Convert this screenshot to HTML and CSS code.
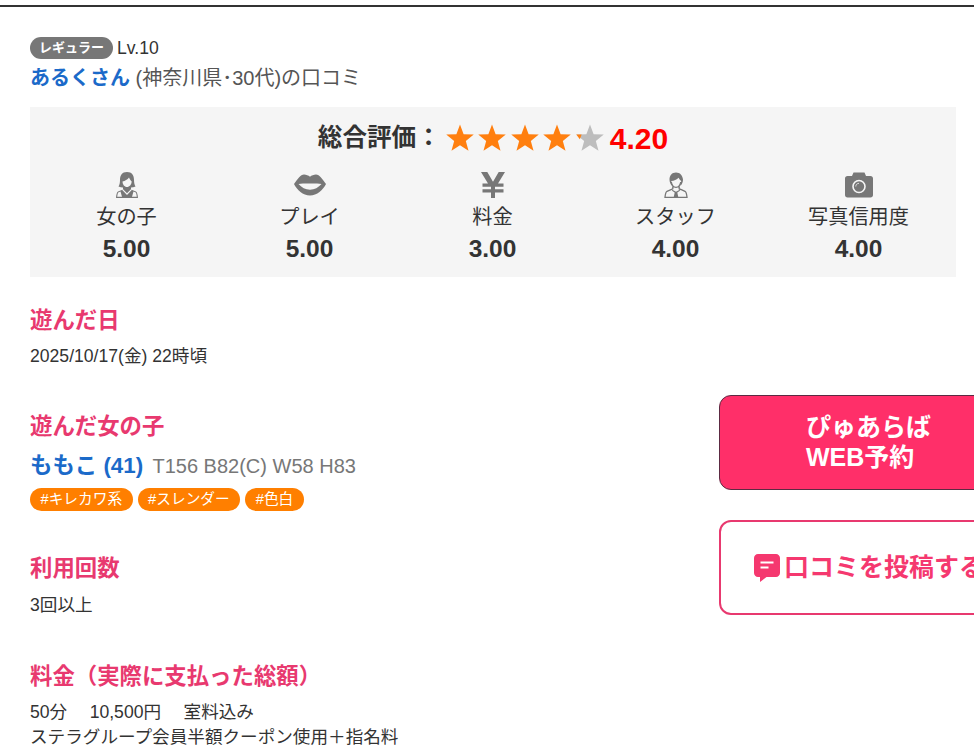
FILE: index.html
```html
<!DOCTYPE html>
<html lang="ja">
<head>
  <meta charset="UTF-8" />
  <title>口コミ</title>
  <link rel="stylesheet" href="styles.css">
</head>
<body>
  <main class="review">
    <div class="reviewer">
      <div class="rank"><span class="rank-badge">レギュラー</span><span class="rank-level">Lv.10</span></div>
      <div class="reviewer-name"><a href="#">あるくさん</a> (神奈川県･30代)の口コミ</div>
    </div>

    <section class="rating">
      <div class="rating-total">
        <span class="rating-label">総合評価：</span>
        <span class="stars">
          <svg viewBox="0 0 24 24"><path class="on" d="M12 .5l3.1 8.2 8.7.4-6.8 5.5 2.3 8.4L12 18.200l-7.300 4.800 2.300-8.400L.2 9.100l8.700-.4z"/></svg>
          <svg viewBox="0 0 24 24"><path class="on" d="M12 .5l3.1 8.2 8.7.4-6.8 5.5 2.3 8.4L12 18.200l-7.300 4.800 2.300-8.400L.2 9.100l8.700-.4z"/></svg>
          <svg viewBox="0 0 24 24"><path class="on" d="M12 .5l3.1 8.2 8.7.4-6.8 5.5 2.3 8.4L12 18.200l-7.300 4.800 2.300-8.400L.2 9.100l8.700-.4z"/></svg>
          <svg viewBox="0 0 24 24"><path class="on" d="M12 .5l3.1 8.2 8.7.4-6.8 5.5 2.3 8.4L12 18.200l-7.300 4.800 2.300-8.400L.2 9.100l8.700-.4z"/></svg>
          <svg viewBox="0 0 24 24">
            <path class="off" d="M12 .5l3.1 8.2 8.7.4-6.8 5.500 2.300 8.400L12 18.200l-7.300 4.800 2.300-8.400L.2 9.100l8.700-.4z"/>
            <path class="on" d="M.2 9.100l4.600-.2L3.300 13z"/>
          </svg>
        </span>
        <span class="rating-score">4.20</span>
      </div>
      <div class="rating-items">
        <div class="rating-item">
          <svg class="item-icon" viewBox="0 0 24 26">
            <path d="M12 0C7 0 5 3.500 5 8c0 3-.5 5-1.500 6.500 1.500.7 3 1 4.500 1v2L3 19.500C1.800 20.300 1.300 22.500 1 26h22c-.3-3.500-.8-5.700-2-6.500L16 17.500v-2c1.500 0 3-.3 4.500-1C19.500 13 19 11 19 8c0-4.500-2-8-7-8z"/>
            <path class="cut" d="M7.500 9.500C10 9 12.500 7.500 14 5.500c.8 1.800 1.700 3.200 2.700 4-.2 3-2.200 5.500-4.700 5.500S7.600 12.500 7.500 9.500zM7 17.800l5 5.200 5-5.200-.8-.7L12 21.300l-4.200-4.200zM2.200 24.800c.2-1.800.5-3.300 1-4.200l2.300-1.100 1.500 5.300zM21.800 24.800c-.2-1.800-.5-3.300-1-4.200l-2.300-1.100-1.500 5.300z"/>
          </svg>
          <div class="item-name">女の子</div>
          <div class="item-score">5.00</div>
        </div>
        <div class="rating-item">
          <svg class="item-icon lips" viewBox="0 0 32 24">
            <path d="M10 1.500c2.200 0 4.500 1 6 2.200 1.500-1.200 3.800-2.200 6-2.200 3.500 0 6.500 5 10 9.500-3 6-9 11.500-16 11.500S3 17 0 11C3.500 6.500 6.500 1.500 10 1.500z"/>
            <path class="cut" d="M4.500 11c4-.6 7.500-.5 11.500-.5s7.500-.1 11.500.5c-3 3.300-7 5.800-11.500 5.800S7.500 14.300 4.500 11z"/>
          </svg>
          <div class="item-name">プレイ</div>
          <div class="item-score">5.00</div>
        </div>
        <div class="rating-item">
          <svg class="item-icon yen" viewBox="0 0 24 26">
            <path d="M0 0h6.300L12 9.700 17.700 0H24L17 11.500h5.500v3.300H14v2.400h8.500v3.300H14V26h-4v-5.500H1.500v-3.300H10v-2.400H1.500v-3.300H7z"/>
          </svg>
          <div class="item-name">料金</div>
          <div class="item-score">3.00</div>
        </div>
        <div class="rating-item">
          <svg class="item-icon" viewBox="0 0 24 26">
            <path d="M12 .5C8 .5 5.500 3.300 5.500 7.500c0 2.300.8 4.400 2.200 5.900l.8-.4c-.8-1.400-1.200-2.700-1.200-4 2.800-.3 5.500-1.200 7.300-3.300.8 1.500 1.600 2.600 2.600 3.300 0 1.400-.4 2.700-1.200 4l.8.4c1.400-1.500 2.200-3.600 2.200-5.900C18.500 3.300 16 .5 12 .5z"/>
            <path class="line" d="M7.300 10c.5 3 2.400 5.300 4.700 5.300s4.200-2.300 4.700-5.300M8.800 14.500v2.300L3 19.300C1.700 20 1.300 22.500 1 25.300h22c-.3-2.800-.7-5.300-2-6-2-1-4-1.700-5.800-2.500v-2.300"/>
            <path d="M8.300 17.800L12 19.800l3.700-2 .3 1-2.700 1.600 1 4.900H9.700l1-4.900L8 18.800z"/>
          </svg>
          <div class="item-name">スタッフ</div>
          <div class="item-score">4.00</div>
        </div>
        <div class="rating-item">
          <svg class="item-icon camera" viewBox="0 0 28 25">
            <path d="M8.500 0h11L21 3.500h4.500C27 3.500 28 4.500 28 6v16.500c0 1.500-1 2.500-2.500 2.500h-23C1 25 0 24 0 22.500V6c0-1.500 1-2.500 2.500-2.500H7z"/>
            <circle class="ring" cx="14" cy="14" r="6"/>
            <path class="ring-mark" d="M10.800 14c0-1.800 1.400-3.200 3.200-3.200"/>
          </svg>
          <div class="item-name">写真信用度</div>
          <div class="item-score">4.00</div>
        </div>
      </div>
    </section>

    <section class="detail detail-date">
      <h2>遊んだ日</h2>
      <p>2025/10/17(金) 22時頃</p>
    </section>

    <div class="columns">
      <div class="column-main">
        <section class="detail">
          <h2>遊んだ女の子</h2>
          <div class="girl"><a href="#">ももこ (41)</a> <span class="girl-size">T156 B82(C) W58 H83</span></div>
          <ul class="tags">
            <li>#キレカワ系</li>
            <li>#スレンダー</li>
            <li>#色白</li>
          </ul>
        </section>
        <section class="detail detail-count">
          <h2>利用回数</h2>
          <p>3回以上</p>
        </section>
      </div>
      <aside class="column-side">
        <a class="btn btn-reserve" href="#">ぴゅあらば<br>WEB予約</a>
        <a class="btn btn-post" href="#">
          <svg viewBox="0 0 26 28"><path d="M4 0h18c2.200 0 4 1.800 4 4v15c0 2.200-1.800 4-4 4H12.500L6 28v-5H4c-2.200 0-4-1.800-4-4V4C0 1.800 1.800 0 4 0z"/><path class="cut" d="M6.500 7.500h13v2h-13zM6.500 12.500h8v2h-8z"/></svg>
          <span>口コミを投稿する</span>
        </a>
      </aside>
    </div>

    <section class="detail">
      <h2>料金（実際に支払った総額）</h2>
      <p>50分　 10,500円　 室料込み<br>ステラグループ会員半額クーポン使用＋指名料</p>
    </section>
  </main>
</body>
</html>
```

FILE: styles.css
```css
* {
  margin: 0;
  padding: 0;
  box-sizing: border-box;
}

html, body {
  height: 750px;
  overflow: hidden;
}

body {
  font-family: "Liberation Sans", "Noto Sans CJK JP", sans-serif;
  color: #333;
  background-color: #fff;
  font-size: 17.6px;
  line-height: 1.5;
}

a {
  color: #1b6ac9;
  text-decoration: none;
  font-weight: bold;
}

.review {
  margin-top: 5px;
  border-top: 2px solid #333;
  padding: 30px 18px 0 30px;
}

/* reviewer */
.rank {
  line-height: 23px;
  height: 22px;
}

.rank-badge {
  display: inline-block;
  background-color: #777;
  color: #fff;
  font-size: 13px;
  font-weight: bold;
  line-height: 22px;
  height: 22px;
  padding: 0 9px;
  border-radius: 11px;
  vertical-align: top;
}

.rank-level {
  margin-left: 4px;
}

.reviewer-name {
  font-size: 20px;
  line-height: 30px;
  margin-top: 4px;
  color: #555;
}

/* rating box */
.rating {
  margin-top: 14px;
  background-color: #f5f5f5;
  height: 170px;
  padding: 11px 5px 0;
}

.rating-total {
  display: flex;
  justify-content: center;
  align-items: center;
  height: 40px;
}

.rating-label {
  font-size: 24.6px;
  font-weight: bold;
}

.stars {
  display: flex;
  gap: 4.5px;
  margin-left: 5px;
}

.stars svg {
  width: 28px;
  height: 28px;
}

.on {
  fill: #ff7f0f;
}

.off {
  fill: #bdbdbd;
}

.rating-score {
  font-size: 30px;
  font-weight: bold;
  color: #f00;
  margin-left: 6px;
}

.rating-items {
  display: grid;
  grid-template-columns: repeat(5, 183px);
  margin-top: 14px;
}

.rating-item {
  text-align: center;
}

.item-icon {
  display: block;
  width: 24px;
  height: 26px;
  margin: 0 auto;
  fill: #777;
}

.item-icon.lips {
  width: 32px;
}

.item-icon.yen {
  width: 26px;
}

.item-icon.camera {
  width: 28px;
}

.cut {
  fill: #f5f5f5;
}

.line {
  fill: none;
  stroke: #777;
  stroke-width: 1.3;
}

.ring {
  fill: none;
  stroke: #f5f5f5;
  stroke-width: 1.6;
}

.ring-mark {
  fill: none;
  stroke: #ddd;
  stroke-width: 1;
}

.item-name {
  font-size: 20.2px;
  line-height: 30px;
  margin-top: 4px;
}

.item-score {
  font-size: 24.5px;
  font-weight: bold;
  line-height: 33px;
}

/* details */
.detail {
  margin-bottom: 41px;
}

.detail-date {
  margin-top: 27px;
  margin-bottom: 41px;
}

.detail-count {
  margin-bottom: 42px;
}

.detail h2 {
  color: #e8396f;
  font-size: 22.4px;
  line-height: 33px;
  font-weight: bold;
  margin-bottom: 7px;
}

.detail-count h2 {
  margin-bottom: 8px;
}

.detail p {
  font-size: 17.6px;
  line-height: 25px;
}

.girl {
  font-size: 22.4px;
  line-height: 32px;
}

.girl-size {
  font-size: 20px;
  color: #777;
  margin-left: 3px;
}

.tags {
  display: flex;
  gap: 5px;
  list-style: none;
  margin-top: 6px;
}

.tags li {
  background-color: #ff7f00;
  color: #fff;
  font-size: 14.7px;
  line-height: 23px;
  padding: 0 10.5px;
  border-radius: 12px;
}

/* buttons */
.columns {
  display: flex;
}

.column-main {
  width: 689px;
  flex-shrink: 0;
}

.column-side {
  width: 300px;
  flex-shrink: 0;
  display: flex;
  flex-direction: column;
  gap: 30px;
  margin-top: -15px;
}

.btn {
  display: block;
  height: 95px;
  border-radius: 12px;
}

.btn-reserve {
  background-color: #ff2f69;
  border: 1px solid #5c2a42;
  color: #fff;
  font-size: 25px;
  line-height: 30px;
  padding: 16px 0 0 86px;
}

.btn-post {
  border: 2px solid #e8396f;
  color: #f5386f;
  font-size: 25px;
  display: flex;
  align-items: center;
  padding-left: 33px;
  gap: 4px;
  white-space: nowrap;
}

.btn-post svg {
  width: 26px;
  height: 28px;
  fill: #f5386f;
  flex-shrink: 0;
}

.btn-post .cut {
  fill: #fff;
}
```
